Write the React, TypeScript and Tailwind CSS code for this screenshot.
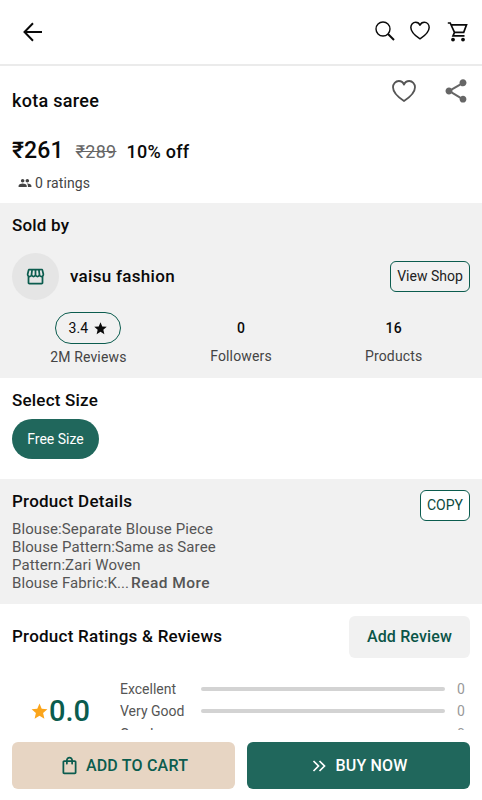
import {
  MdGroup,
  MdOutlineShoppingBag,
  MdOutlineStorefront,
  MdShare,
  MdStar,
} from "react-icons/md";

interface ShopStat {
  value: string;
  label: string;
}

const shopStats: ShopStat[] = [
  { value: "0", label: "Followers" },
  { value: "16", label: "Products" },
];

const details = [
  "Blouse:Separate Blouse Piece",
  "Blouse Pattern:Same as Saree",
  "Pattern:Zari Woven",
];

const ratings = [
  { label: "Excellent", count: 0 },
  { label: "Very Good", count: 0 },
  { label: "Good", count: 0 },
];

const Heart = ({ className }: { className: string }) => (
  <svg viewBox="0 0 24 22" fill="none" stroke="currentColor" className={className}>
    <path
      d="M12 21C8.6 18.8 1 13.8 1 7.3 1 3.7 3.6 1 6.8 1 9.200 1 11.100 2.300 12 4.600 12.900 2.300 14.800 1 17.200 1 20.400 1 23 3.700 23 7.300 23 13.800 15.400 18.800 12 21Z"
      strokeLinejoin="round"
    />
  </svg>
);

const Cart = ({ className }: { className: string }) => (
  <svg
    viewBox="0 0 21 20"
    fill="none"
    stroke="currentColor"
    strokeWidth="1.700"
    className={className}
  >
    <path d="M.8 1h2.400l4.300 9.300h9.200L19.500 2.800H4M7.500 10.300l-1.500 3.500h11.500" />
    <g fill="currentColor" stroke="none">
      <circle cx="6" cy="17.600" r="1.900" />
      <circle cx="16" cy="17.600" r="1.900" />
    </g>
  </svg>
);

const Header = () => (
  <header className="flex h-[66px] shrink-0 items-center border-b-2 border-[#ebebeb] pr-[14px] pl-[23px]">
    <svg
      viewBox="0 0 20 20"
      fill="none"
      stroke="currentColor"
      strokeWidth="2"
      className="size-5"
    >
      <path d="M19 10H2M10 1.300 1.500 10 10 18.700" />
    </svg>
    <svg
      viewBox="0 0 20 20"
      fill="none"
      stroke="currentColor"
      className="mr-[15px] mb-[3px] ml-auto size-5"
    >
      <circle cx="8" cy="8" r="7" strokeWidth="1.400" />
      <path d="M13 13l6 6" strokeWidth="2" />
    </svg>
    <Heart className="mr-[17px] mb-[3px] h-[19px] w-5 stroke-[1.8]" />
    <Cart className="mb-px h-5 w-[21px]" />
  </header>
);

const Product = () => (
  <section className="flex h-[137px] shrink-0 flex-col pl-3">
    <div className="flex h-[60px] items-start pr-[12px]">
      <h1 className="mt-[23px] text-[18px] leading-6 font-medium tracking-[0.3px]">
        kota saree
      </h1>
      <Heart className="mt-[14px] ml-auto h-[22px] w-6 stroke-[1.8] text-[#555]" />
      <MdShare className="mt-[11px] ml-[26px] size-[28px] text-[#666]" />
    </div>
    <div className="flex h-12 items-center">
      <span className="mt-[2px] text-[23px] font-medium tracking-[0.1px]">₹261</span>
      <span className="mt-[3px] ml-[12px] text-[18px] tracking-[0.3px] text-[#666] line-through">
        ₹289
      </span>
      <span className="mt-[3px] ml-[10px] text-[18px] font-medium tracking-[0.25px]">
        10% off
      </span>
    </div>
    <div className="flex items-center pl-[6px] text-[14px] leading-[18px] tracking-[0.1px] text-[#444]">
      <MdGroup className="mr-[3px] size-[14px]" />0 ratings
    </div>
  </section>
);

const SoldBy = () => (
  <section className="h-[175px] shrink-0 bg-[#f1f1f1] px-3 pt-[10px]">
    <h2 className="text-[17px] leading-6 font-medium tracking-[0.2px]">Sold by</h2>
    <div className="mt-4 flex items-center">
      <div className="flex size-[47px] items-center justify-center rounded-full bg-[#e5e5e5]">
        <MdOutlineStorefront className="size-[21px] text-[#0b5c4e]" />
      </div>
      <span className="ml-[11px] text-[17px] font-medium tracking-[0.3px]">
        vaisu fashion
      </span>
      <button className="ml-auto h-[31px] w-20 rounded-[6px] border border-[#0b5c4e] text-[14px] text-[#222]">
        View Shop
      </button>
    </div>
    <div className="mt-3 grid grid-cols-3 text-center text-[14px] tracking-[0.15px]">
      <div className="flex flex-col items-center">
        <div className="flex h-8 w-[66px] items-center justify-center rounded-full border border-[#0b5c4e]">
          3.4 <MdStar className="ml-[5px] size-[15px]" />
        </div>
        <span className="mt-[3px] leading-5 text-[#444]">2M Reviews</span>
      </div>
      {shopStats.map((stat) => (
        <div key={stat.label} className="pt-[6px] leading-5">
          <div className="font-medium">{stat.value}</div>
          <div className="mt-[8px] text-[#444]">{stat.label}</div>
        </div>
      ))}
    </div>
  </section>
);

const SelectSize = () => (
  <section className="h-[101px] shrink-0 px-3 pt-[10px]">
    <h2 className="text-[17px] leading-6 font-medium tracking-[0.2px]">Select Size</h2>
    <button className="mt-[7px] h-10 w-[87px] rounded-full bg-[#20675c] text-[14px] text-white">
      Free Size
    </button>
  </section>
);

const ProductDetails = () => (
  <section className="flex h-[125px] shrink-0 justify-between bg-[#f1f1f1] px-3 pt-[10px]">
    <div>
      <h2 className="text-[17px] leading-6 font-medium tracking-[0.25px]">
        Product Details
      </h2>
      <div className="mt-2 text-[15px] leading-[17.8px] tracking-[0.1px] text-[#555]">
        {details.map((line) => (
          <p key={line}>{line}</p>
        ))}
        <p className="mt-px">
          Blouse Fabric:K...{" "}
          <span className="-ml-[2px] text-[15.5px] font-medium tracking-[0.45px]">
            Read More
          </span>
        </p>
      </div>
    </div>
    <button className="mt-[1px] h-[31px] w-[50px] rounded-[6px] border border-[#0b5c4e] bg-white text-[14px] text-[#0b4a3d]">
      COPY
    </button>
  </section>
);

const Reviews = () => (
  <section className="h-[126px] shrink-0 overflow-hidden px-3 pt-3">
    <div className="flex items-center justify-between">
      <h2 className="text-[17px] font-medium tracking-[0.25px]">
        Product Ratings &amp; Reviews
      </h2>
      <button className="h-[42px] w-[121px] rounded-[6px] bg-[#f1f1f1] text-[16px] font-medium tracking-[0.15px] text-[#0b5548]">
        Add Review
      </button>
    </div>
    <div className="mt-5 flex items-start">
      <div className="mt-[15px] flex w-[108px] items-center pl-[18px] text-[#0b5c4e]">
        <MdStar className="size-[19px] text-[#fba51b]" />
        <span className="text-[29px] leading-[36px] font-medium">0.0</span>
      </div>
      <div className="flex-1 text-[14px] leading-[22.3px]">
        {ratings.map((rating) => (
          <div key={rating.label} className="flex items-center">
            <span className="w-[81px] text-[#555]">{rating.label}</span>
            <div className="h-[4px] w-[244px] rounded-full bg-[#d3d3d3]" />
            <span className="ml-3 text-[#999]">{rating.count}</span>
          </div>
        ))}
      </div>
    </div>
  </section>
);

const ActionBar = () => (
  <footer className="grid h-[70px] shrink-0 grid-cols-2 gap-3 bg-white px-3 pt-3 text-[16px] font-medium tracking-[0.2px]">
    <button className="flex h-[47px] items-center justify-center rounded-[6px] bg-[#e7d5c3] text-[#0b5c4e]">
      <MdOutlineShoppingBag className="mr-[6px] size-[21px]" />
      <span className="mt-px">ADD TO CART</span>
    </button>
    <button className="flex h-[47px] items-center justify-center rounded-[6px] bg-[#20675c] pl-[3px] text-white">
      <svg
        viewBox="0 0 14 12"
        fill="none"
        stroke="currentColor"
        strokeWidth="1.700"
        className="mr-[9px] h-3 w-[14px]"
      >
        <path d="M1.500 1l5 5-5 5M7.500 1l5 5-5 5" />
      </svg>
      <span className="mt-px">BUY NOW</span>
    </button>
  </footer>
);

export default function App() {
  return (
    <div className="flex h-[800px] w-full flex-col overflow-hidden bg-white font-['Roboto',sans-serif] text-[#0a0a0a]">
      <Header />
      <Product />
      <SoldBy />
      <SelectSize />
      <ProductDetails />
      <Reviews />
      <ActionBar />
    </div>
  );
}
